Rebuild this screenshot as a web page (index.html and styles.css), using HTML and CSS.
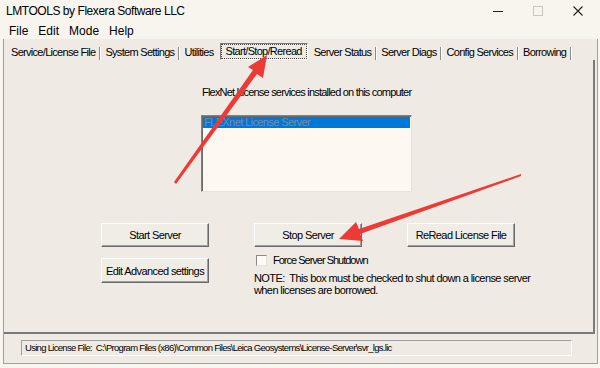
FILE: index.html
```html
<!DOCTYPE html>
<html>
<head>
	<meta charset="utf-8">
	<title>LMTOOLS by Flexera Software LLC</title>
	<link rel="stylesheet" href="styles.css">
</head>
<body>

<div class="window">
	<div class="titlebar">
		<span class="title">LMTOOLS by Flexera Software LLC</span>
		<div class="caption">
			<svg width="10" height="10" viewBox="0 0 10 10"><line x1="0" y1="5.5" x2="10" y2="5.5" stroke="#222" stroke-width="1"/></svg>
			<svg width="10" height="10" viewBox="0 0 10 10"><rect x="0.5" y="0.5" width="9" height="9" fill="none" stroke="#c9c6c1" stroke-width="1"/></svg>
			<svg width="10" height="10" viewBox="0 0 10 10"><path d="M0.5 0.5 L9.5 9.5 M9.5 0.5 L0.5 9.5" stroke="#222" stroke-width="1.1"/></svg>
		</div>
	</div>

	<div class="menubar">
		<span>File</span>
		<span>Edit</span>
		<span>Mode</span>
		<span>Help</span>
	</div>

	<div class="frame">
		<div class="tabs">
			<span class="tab">Service/License File</span><span class="sep"></span>
			<span class="tab">System Settings</span><span class="sep"></span>
			<span class="tab">Utilities</span>
			<span class="tab active">Start/Stop/Reread</span>
			<span class="tab">Server Status</span><span class="sep"></span>
			<span class="tab">Server Diags</span><span class="sep"></span>
			<span class="tab">Config Services</span><span class="sep"></span>
			<span class="tab">Borrowing</span><span class="sep"></span>
		</div>

		<div class="panel">
			<div class="services">
				<div class="label">FlexNet License services installed on this computer</div>
				<div class="listbox">
					<div class="item selected">FLEXnet License Server</div>
				</div>
			</div>

			<div class="controls">
				<div class="col">
					<button class="btn">Start Server</button>
					<button class="btn btn-tall">Edit Advanced settings</button>
				</div>
				<div class="col">
					<button class="btn">Stop Server</button>
					<label class="check"><span class="box"></span>Force Server Shutdown</label>
					<div class="note">NOTE:&nbsp; This box must be checked to shut down a license server<br>when licenses are borrowed.</div>
				</div>
				<div class="col">
					<button class="btn">ReRead License File</button>
				</div>
			</div>
		</div>

		<div class="status">
			<div class="status-field">Using License File:&nbsp; C:\Program Files (x86)\Common Files\Leica Geosystems\License-Server\svr_lgs.lic</div>
		</div>
	</div>

	<!-- red annotation arrows -->
	<svg class="marks" width="600" height="368" viewBox="0 0 600 368">
		<polygon points="174,182 253,70 248,67 267,55 263,78 257,74 176,184" fill="#ee3a36"/>
		<polygon points="521,174 359,229 356,222 339,239 363,241 360,234 521,176" fill="#ee3a36"/>
	</svg>
</div>

</body>
</html>
```

FILE: styles.css
```css
*{
	margin: 0;
	padding: 0;
	box-sizing: border-box;
}

body{
	width: 600px;
	height: 368px;
	overflow: hidden;
	background-color: #f8f4ee;
	font-family: "Liberation Sans", Arial, sans-serif;
	font-size: 11px;
	color: #000;
}

.window{
	position: relative;
	height: 368px;
	display: flex;
	flex-direction: column;
}

.titlebar{
	height: 22px;
	display: flex;
	align-items: center;
	justify-content: space-between;
	padding-left: 6px;
}

.title{
	font-size: 12px;
	letter-spacing: -0.45px;
}

.caption{
	display: flex;
	align-items: center;
	gap: 30px;
	padding-right: 17px;
}

.caption svg{
	display: block;
}

.menubar{
	height: 17px;
	display: flex;
	align-items: center;
	gap: 10px;
	padding-left: 9px;
	font-size: 12px;
}

.frame{
	flex: 1;
	margin: 0 2px 4px 3px;
	border: 1px solid #a0a0a0;
	border-top: 0;
	background-color: #efeae3;
	display: flex;
	flex-direction: column;
}

/* tab strip */
.tabs{
	height: 21px;
	display: flex;
	align-items: flex-end;
	padding-left: 3px;
	letter-spacing: -0.7px;
}

.tab{
	height: 16px;
	line-height: 13px;
	padding: 2px 4px 1px;
	white-space: nowrap;
}

.sep{
	width: 1px;
	height: 13px;
	background-color: #8c8c8c;
	box-shadow: 1px 0 #fff;
	margin-right: 1px;
}

.tab.active{
	height: 17px;
	margin: 0 2px 0 2px;
	padding: 1px 5px 0;
	border: 1px solid;
	border-color: #7a7a7a #fff #fff #7a7a7a;
	outline: 1px dotted #444;
	outline-offset: -2px;
}

/* page */
.panel{
	flex: 1;
	margin-right: 2px;
	border-right: 2px solid #7a7a7a;
	border-bottom: 2px solid #7a7a7a;
	padding-top: 26px;
	letter-spacing: -0.6px;
}

.services{
	margin-left: 197px;
}

.label{
	line-height: 13px;
	padding-left: 1px;
	letter-spacing: -0.8px;
}

.listbox{
	margin-top: 16px;
	width: 211px;
	height: 77px;
	border: 1px solid;
	border-color: #828282 #e6e1da #e6e1da #828282;
	box-shadow: inset 1px 1px #6a6a6a;
	background-color: #fdf8f0;
	padding: 1px 1px 0 1px;
}

.item{
	height: 11px;
	line-height: 11px;
	padding-left: 1px;
}

.item.selected{
	background-color: #0078d7;
	color: #7a8aa5;
}

.controls{
	display: flex;
	gap: 45px;
	margin: 31px 0 0 97px;
}

.col{
	width: 108px;
	display: flex;
	flex-direction: column;
}

.btn{
	width: 108px;
	height: 24px;
	font: inherit;
	letter-spacing: inherit;
	color: #000;
	background-color: #f0ece6;
	border: 1px solid;
	border-color: #fff #696969 #696969 #fff;
	box-shadow: inset -1px -1px #a0a0a0;
	white-space: nowrap;
}

.btn-tall{
	height: 25px;
	margin-top: 11px;
}

.check{
	display: flex;
	align-items: center;
	gap: 6px;
	margin-top: 7px;
	line-height: 13px;
	white-space: nowrap;
	letter-spacing: -1px;
}

.box{
	flex-shrink: 0;
	width: 11px;
	height: 11px;
	margin-left: 2px;
	background-color: #fdfaf5;
	border: 1px solid;
	border-color: #8a8a8a #e4e0da #e4e0da #8a8a8a;
}

.note{
	margin-top: 5px;
	line-height: 12px;
	white-space: nowrap;
}

/* status line */
.status{
	height: 29px;
	padding: 6px 25px 0 17px;
}

.status-field{
	height: 16px;
	line-height: 14px;
	padding-left: 3px;
	border: 1px solid;
	border-color: #a0a0a0 #fff #fff #a0a0a0;
	font-size: 9.5px;
	letter-spacing: -0.7px;
	white-space: nowrap;
	overflow: hidden;
}

.marks{
	position: absolute;
	left: 0;
	top: 0;
	pointer-events: none;
}
```
